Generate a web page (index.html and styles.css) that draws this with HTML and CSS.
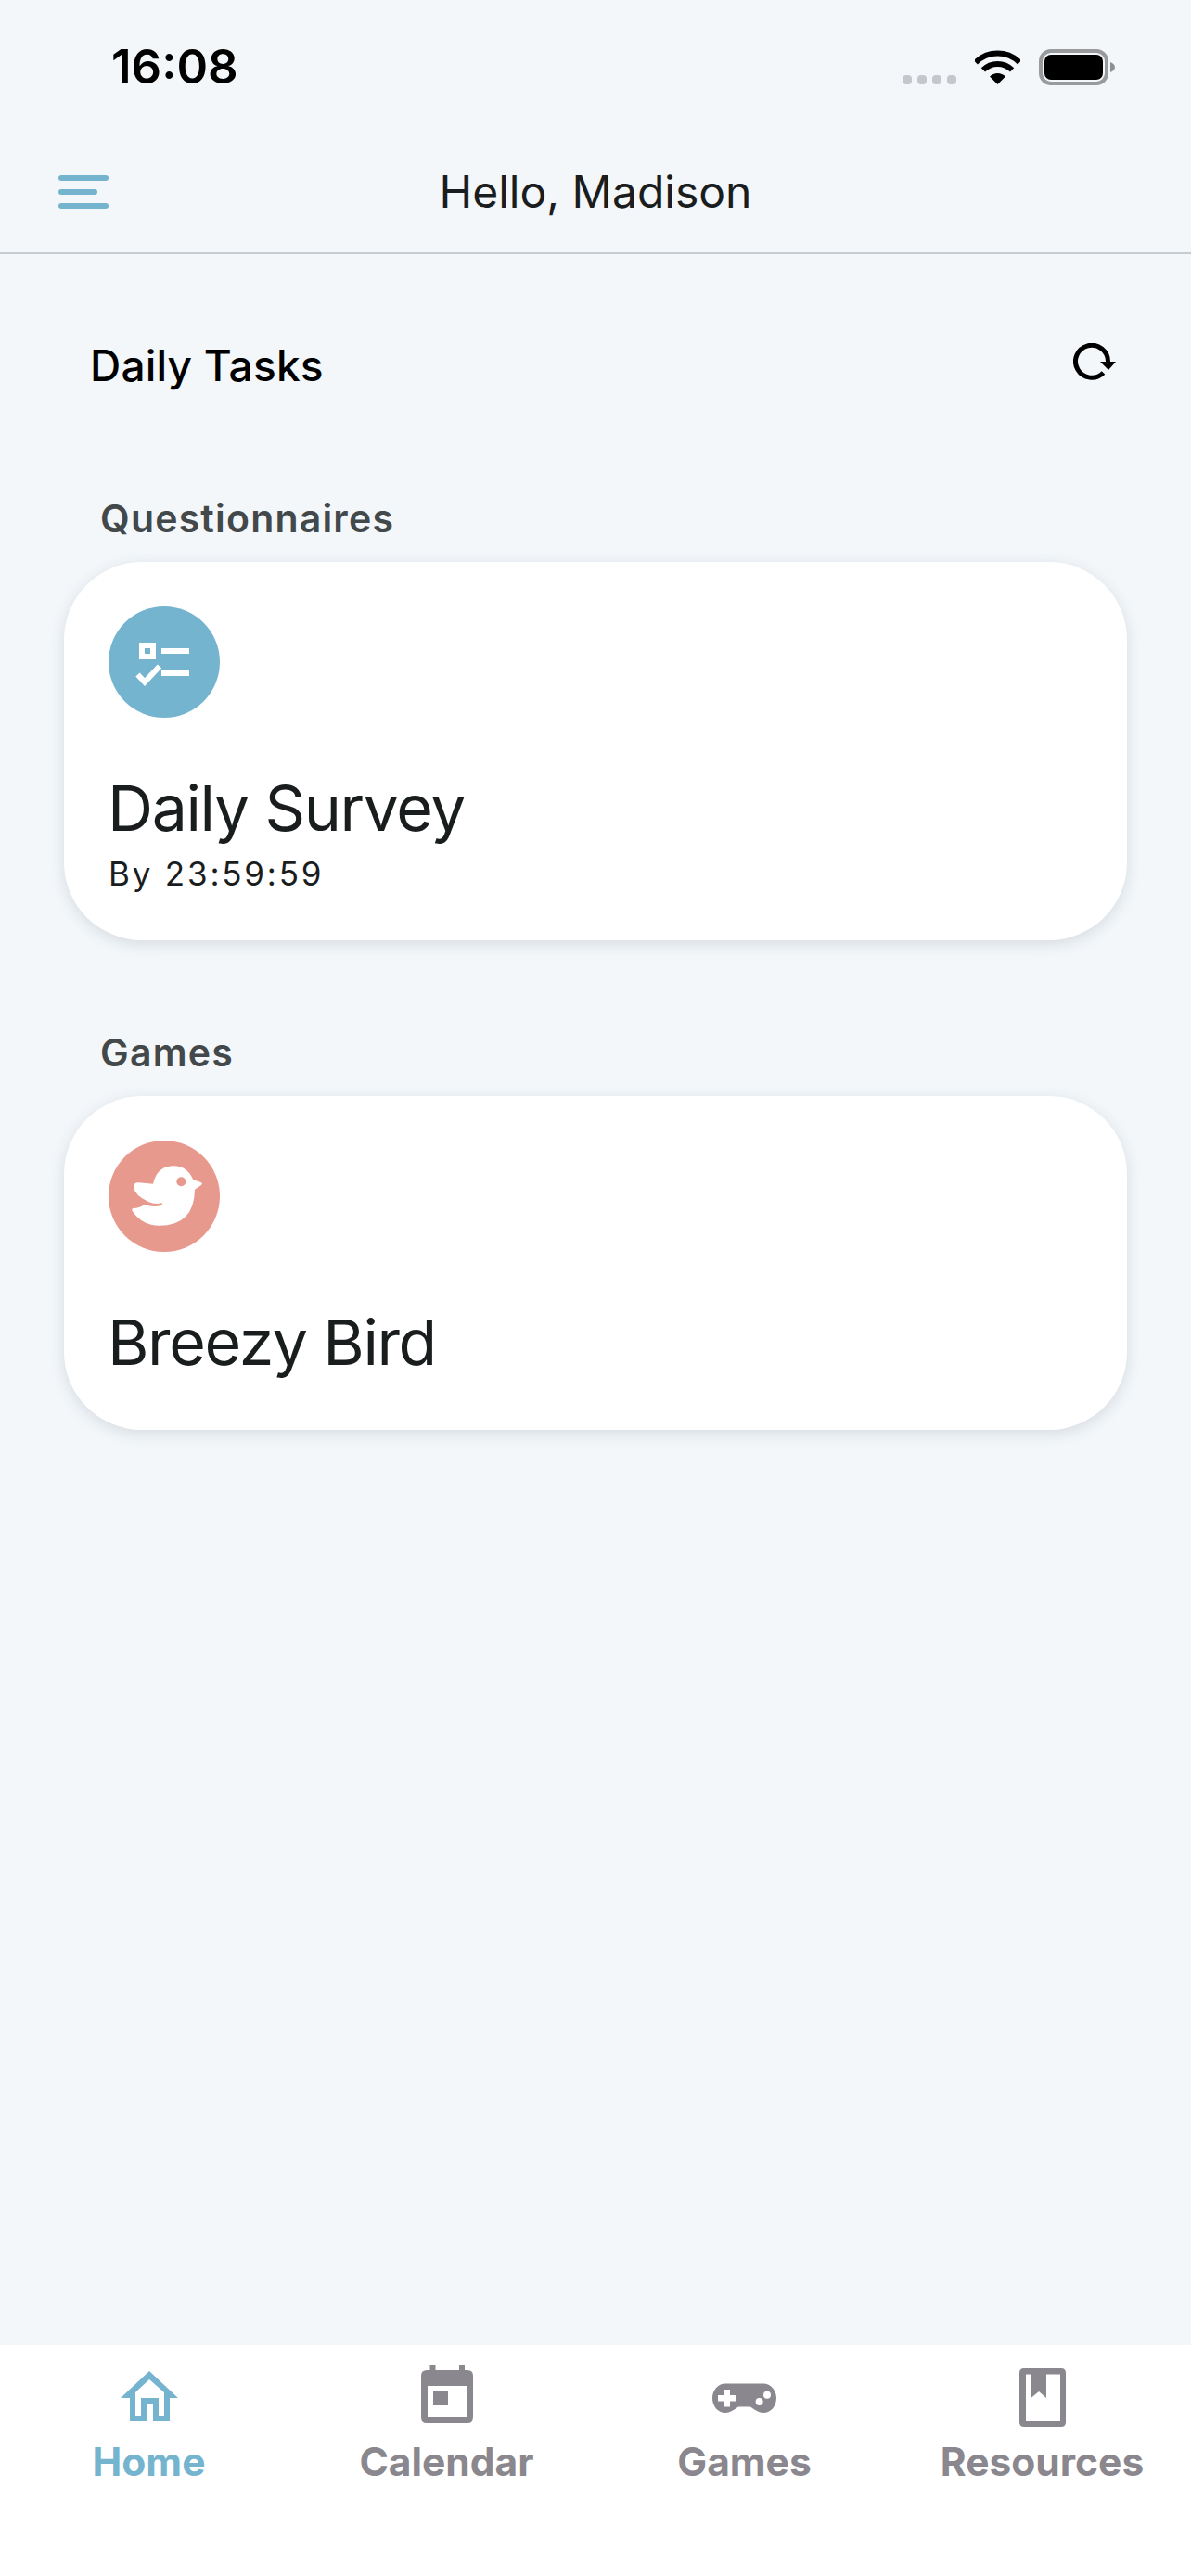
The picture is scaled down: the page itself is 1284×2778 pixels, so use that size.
FILE: index.html
```html
<!DOCTYPE html>
<html lang="en">
<head>
  <meta charset="UTF-8" />
  <meta name="viewport" content="width=device-width, initial-scale=1.0" />
  <title>Hello, Madison</title>
  <link rel="stylesheet" href="styles.css">
</head>
<body>
  <div class="status-bar">
    <span class="time">16:08</span>
    <div class="status-icons">
      <div class="signal"><i></i><i></i><i></i><i></i></div>
      <svg class="wifi" width="49" height="37" viewBox="0 0 49 37">
        <path d="M0.8 13.3A33.5 33.5 0 0 1 48.2 13.3" fill="none" stroke="#000" stroke-width="6"/>
        <path d="M8.9 21.4A22 22 0 0 1 40.1 21.4" fill="none" stroke="#000" stroke-width="6"/>
        <path d="M24.5 37L16 28.5A12 12 0 0 1 33 28.5Z" fill="#000"/>
      </svg>
      <svg class="battery" width="82" height="39" viewBox="0 0 82 39">
        <rect x="2" y="2" width="71" height="35" rx="11" fill="none" stroke="#999a9c" stroke-width="4"/>
        <rect x="6" y="6" width="63" height="27" rx="7" fill="#000"/>
        <path d="M77 14C80 15 82 17 82 19.5C82 22 80 24 77 25Z" fill="#8f9092"/>
      </svg>
    </div>
  </div>

  <header class="nav">
    <div class="menu-icon"><i></i><i class="short"></i><i></i></div>
    <h1>Hello, Madison</h1>
  </header>

  <main>
    <div class="tasks-head">
      <h2>Daily Tasks</h2>
      <svg class="refresh" width="46" height="40" viewBox="0 0 46 40">
        <path d="M32.5 32A17.5 17.5 0 1 1 37.5 20" fill="none" stroke="#000" stroke-width="5"/>
        <path d="M29 20H46L38 29Z" fill="#000"/>
      </svg>
    </div>

    <section class="group first">
      <h3>Questionnaires</h3>
      <div class="card">
        <div class="badge blue">
          <svg width="120" height="120" viewBox="0 0 120 120">
            <path fill-rule="evenodd" d="M33 39H51V57H33ZM39 45V51H45V45Z" fill="#fff"/>
            <rect x="57" y="45" width="30" height="6" fill="#fff"/>
            <rect x="57" y="69" width="30" height="6" fill="#fff"/>
            <path d="M31.5 73.5L39 81.5L55 64.5" fill="none" stroke="#fff" stroke-width="6"/>
          </svg>
        </div>
        <div class="card-title">Daily Survey</div>
        <div class="card-sub">By 23:59:59</div>
      </div>
    </section>

    <section class="group">
      <h3>Games</h3>
      <div class="card game">
        <div class="badge pink">
          <svg width="120" height="120" viewBox="51 45 360 360">
            <path d="M132 195Q133 180 148 181L195 185Q208 127 262 127Q305 127 325 172L350 180Q357 184 350 190L330 203Q328 320 215 320Q160 320 128 273Q124 265 132 264Q150 264 168 252Q195 262 222 255Q228 250 222 247Q200 252 180 243Q135 222 132 195Z" fill="#fff"/>
            <circle cx="286" cy="178" r="15" fill="#e8998d"/>
          </svg>
        </div>
        <div class="card-title">Breezy Bird</div>
      </div>
    </section>
  </main>

  <nav class="tabs">
    <div class="tab active">
      <div class="tab-icon">
        <svg width="62" height="54" viewBox="0 0 62 54">
          <path fill-rule="evenodd" fill="#75b4cf" d="M31 0L62 29H53V54H35V35H29V54H10V29H0ZM31 9L16 23V48H22V29H41V48H47V23Z"/>
        </svg>
      </div>
      <span>Home</span>
    </div>
    <div class="tab">
      <div class="tab-icon">
        <svg class="calendar-icon" width="56" height="63" viewBox="0 0 56 63">
          <path fill-rule="evenodd" fill="#8a878e" d="M9.5 0H15.5V6H41V0H47V6H50Q56 6 56 12V57Q56 63 50 63H6Q0 63 0 57V12Q0 6 6 6H9.5ZM7 23V56H50V23ZM13 28H29V44H13Z"/>
        </svg>
      </div>
      <span>Calendar</span>
    </div>
    <div class="tab">
      <div class="tab-icon">
        <svg class="pad-icon" width="69" height="33" viewBox="0 0 69 33">
          <path fill="#8a878e" d="M14 0.5H55C63 0.5 69 8 69 16C69 25 63 32 55 32C50 32 46 29 41 25.5H28C23 29 19 32 14 32C6 32 0 25 0 16C0 8 6 0.5 14 0.5Z"/>
          <path fill="#fff" d="M12.5 7H19V13H25V19.5H19V25.5H12.5V19.5H6V13H12.5Z"/>
          <circle cx="59" cy="12.7" r="4" fill="#fff"/>
          <circle cx="50.6" cy="20" r="4" fill="#fff"/>
        </svg>
      </div>
      <span>Games</span>
    </div>
    <div class="tab">
      <div class="tab-icon">
        <svg class="book-icon" width="50" height="63" viewBox="0 0 50 63">
          <path fill-rule="evenodd" fill="#8a878e" d="M5 0H45Q50 0 50 5V58Q50 63 45 63H5Q0 63 0 58V5Q0 0 5 0ZM7 6.5V57H44V6.5Z"/>
          <path fill="#8a878e" d="M12.5 6H29V32L21 25L12.5 32Z"/>
        </svg>
      </div>
      <span>Resources</span>
    </div>
  </nav>
</body>
</html>
```

FILE: styles.css
```css
* {
  box-sizing: border-box;
}
body {
  margin: 0;
  width: 1284px;
  height: 2778px;
  display: flex;
  flex-direction: column;
  font-family: Inter, "Liberation Sans", sans-serif;
  background-color: #f3f7fa;
  color: #1a1d1e;
}
h1, h2, h3 {
  margin: 0;
  font-weight: 400;
}

.status-bar {
  height: 140px;
  padding: 40px 82px 0 120px;
  display: flex;
  justify-content: space-between;
  align-items: flex-start;
}
.time {
  font-size: 51px;
  line-height: 64px;
  font-weight: 600;
  color: #000;
}
.status-icons {
  display: flex;
  align-items: flex-end;
  margin-top: 13px;
  height: 39px;
}
.signal {
  display: flex;
  gap: 6px;
  margin-right: 20px;
  margin-bottom: 1px;
}
.signal i {
  width: 10px;
  height: 10px;
  border-radius: 4px;
  background-color: #c4c8cc;
}
.wifi {
  margin-right: 20px;
  margin-bottom: 1px;
}

.nav {
  height: 134px;
  position: relative;
  display: flex;
  align-items: center;
  justify-content: center;
  border-bottom: 2px solid #c6ccd2;
}
.nav h1 {
  font-size: 48px;
  line-height: 60px;
  padding-top: 2px;
}
.menu-icon {
  position: absolute;
  left: 63px;
  top: 49px;
  display: flex;
  flex-direction: column;
  gap: 9px;
  width: 54px;
}
.menu-icon i {
  height: 6px;
  border-radius: 3px;
  background-color: #75b4cf;
}
.menu-icon .short {
  width: 42px;
}

main {
  flex: 1;
  padding: 92px 69px 0;
}
.tasks-head {
  height: 56px;
  display: flex;
  justify-content: space-between;
  align-items: center;
  padding: 0 12px 0 28px;
}
.tasks-head h2 {
  font-size: 46px;
  font-weight: 500;
  line-height: 56px;
  letter-spacing: 0.2px;
  color: #000;
}
.refresh {
  margin-bottom: 8px;
}

.group {
  margin-top: 96px;
}
.group.first {
  margin-top: 112px;
}
.group h3 {
  font-size: 41px;
  font-weight: 600;
  line-height: 50px;
  letter-spacing: 1.2px;
  color: #43484b;
  padding-left: 39px;
  margin-bottom: 22px;
}
.card {
  background: #fff;
  border-radius: 84px;
  padding: 48px 48px 52px;
  box-shadow: 0 4px 16px rgba(40,60,80,0.14);
}
.card.game {
  padding-bottom: 55px;
}
.badge {
  width: 120px;
  height: 120px;
  border-radius: 50%;
}
.badge svg {
  display: block;
}
.blue {
  background-color: #75b4cf;
}
.pink {
  background-color: #e8998d;
}
.card-title {
  margin-top: 57px;
  margin-left: -1px;
  font-size: 68px;
  line-height: 80px;
  letter-spacing: -1.4px;
}
.card-sub {
  margin-top: 11px;
  font-size: 35px;
  line-height: 40px;
  letter-spacing: 2.8px;
}

.tabs {
  height: 249px;
  background: #fff;
  display: grid;
  grid-template-columns: repeat(4, 321px);
}
.tab {
  display: flex;
  flex-direction: column;
  align-items: center;
  font-size: 42.5px;
  font-weight: 700;
  line-height: 52px;
  color: #8a878e;
}
.tab.active {
  color: #75b4cf;
}
.tab-icon {
  height: 100px;
  padding-top: 10px;
  display: flex;
  align-items: center;
  justify-content: center;
}
.calendar-icon {
  margin-bottom: 5px;
}
.pad-icon {
  margin-top: 4px;
}
.book-icon {
  margin-top: 3px;
}
```
